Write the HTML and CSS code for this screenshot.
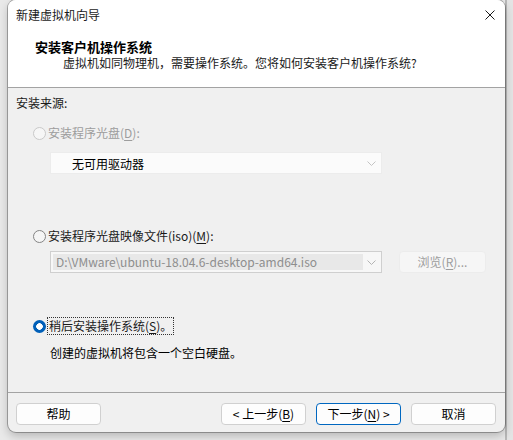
FILE: index.html
```html
<!DOCTYPE html>
<html lang="zh">
<head>
<meta charset="utf-8">
<title>新建虚拟机向导</title>
<link rel="stylesheet" href="styles.css">
</head>
<body>
<div class="window">
  <div class="top">
    <div class="titlebar">
      <span class="title">新建虚拟机向导</span>
      <svg class="close" width="10" height="10" viewBox="0 0 10 10"><path d="M0.5 0.5L9.5 9.5M9.5 0.5L0.5 9.5" stroke="#1a1a1a" stroke-width="1"/></svg>
    </div>
    <div class="header">
      <div class="h-title">安装客户机操作系统</div>
      <div class="h-sub">虚拟机如同物理机，需要操作系统。您将如何安装客户机操作系统?</div>
    </div>
  </div>
  <div class="content">
    <div class="label">安装来源:</div>

    <div class="radio-row disabled r1">
      <span class="radio"></span>
      <span class="rtext">安装程序光盘(<u>D</u>):</span>
    </div>
    <div class="combo combo-disabled c1">
      <span class="combo-text">无可用驱动器</span>
      <svg class="chev" width="9" height="5" viewBox="0 0 9 5"><path d="M0.5 0.5L4.5 4.5L8.5 0.5" fill="none" stroke="#c4c4c4" stroke-width="1"/></svg>
    </div>

    <div class="radio-row r2">
      <span class="radio"></span>
      <span class="rtext">安装程序光盘映像文件(iso)(<u>M</u>):</span>
    </div>
    <div class="combo-line">
      <div class="combo c2">
        <span class="combo-sel">D:\VMware\ubuntu-18.04.6-desktop-amd64.iso</span>
        <svg class="chev" width="9" height="5" viewBox="0 0 9 5"><path d="M0.5 0.5L4.5 4.5L8.5 0.5" fill="none" stroke="#b4b4b4" stroke-width="1"/></svg>
      </div>
      <div class="btn btn-disabled browse">浏览(<u>R</u>)...</div>
    </div>

    <div class="radio-row r3">
      <span class="radio checked"></span>
      <span class="rtext focus">稍后安装操作系统(<u>S</u>)。</span>
    </div>
    <div class="desc">创建的虚拟机将包含一个空白硬盘。</div>
  </div>
  <div class="footer">
    <div class="btn">帮助</div>
    <div class="spacer"></div>
    <div class="btn">&lt; 上一步(<u>B</u>)</div>
    <div class="btn btn-default">下一步(<u>N</u>) &gt;</div>
    <div class="btn">取消</div>
  </div>
</div>
</body>
</html>
```

FILE: styles.css
```css
html, body {
  margin: 0;
  padding: 0;
}
body {
  width: 513px;
  height: 440px;
  overflow: hidden;
  background: linear-gradient(to right, #e9e9e9 0, #e9e9e9 505px, #b9b9b9 505px, #b9b9b9 507px, #e4e4e4 507px);
  font-family: "Noto Sans CJK SC", "Noto Sans", sans-serif;
  font-size: 12px;
  color: #1a1a1a;
}
u {
  text-decoration: underline;
  text-underline-offset: 2px;
}
.window {
  margin-left: 8px;
  width: 497px;
  height: 432px;
  background: #f0f0f0;
  border-radius: 8px;
  box-shadow: 0 0 0 1px rgba(0,0,0,0.28), 0 4px 10px rgba(0,0,0,0.22);
  overflow: hidden;
  display: flex;
  flex-direction: column;
}
.top {
  background: #ffffff;
  border-bottom: 1px solid #a3a3a3;
  height: 88px;
  box-sizing: border-box;
}
.titlebar {
  height: 30px;
  display: flex;
  align-items: center;
  padding-left: 8px;
  padding-right: 10px;
}
.title {
  flex: 1;
  line-height: 16px;
}
.close {
  display: block;
}
.header {
  padding-top: 9px;
}
.h-title {
  font-weight: bold;
  font-size: 13px;
  line-height: 16px;
  padding-left: 27px;
  color: #000;
}
.h-sub {
  line-height: 16px;
  padding-left: 55px;
}
.content {
  flex: 1;
  padding-left: 8px;
  padding-top: 7px;
  border-bottom: 1px solid #a3a3a3;
}
.label {
  line-height: 16px;
}
.radio-row {
  display: flex;
  align-items: center;
  padding-left: 17px;
  height: 16px;
}
.r1 { margin-top: 14px; }
.r2 { margin-top: 54px; }
.r3 { margin-top: 45px; }
.radio {
  width: 11px;
  height: 11px;
  border-radius: 50%;
  border: 1px solid #848484;
  background: #f5f5f5;
  margin-right: 2px;
  box-sizing: content-box;
  flex: none;
}
.disabled .radio {
  border-color: #c9c9c9;
  background: #f6f6f6;
}
.disabled .rtext {
  color: #9d9d9d;
}
.radio.checked {
  width: 13px;
  height: 13px;
  border: none;
  background: radial-gradient(circle, #ffffff 0, #ffffff 3px, #005fb8 3.6px);
}
.rtext {
  line-height: 16px;
}
.focus {
  outline: 1px dotted #333;
  outline-offset: 0px;
  padding: 0 1px;
}
.combo {
  position: relative;
  height: 22px;
  box-sizing: border-box;
  width: 332px;
  margin-left: 34px;
  display: flex;
  align-items: center;
}
.c1 {
  margin-top: 11px;
  background: #fbfbfb;
  border: 1px solid #ececec;
}
.combo-text {
  padding-left: 21px;
  color: #000;
}
.chev {
  position: absolute;
  right: 5px;
  top: 8px;
}
.combo-line {
  display: flex;
  align-items: center;
  margin-top: 7px;
}
.c2 {
  background: #f7f7f7;
  border: 1px solid #cfcfcf;
  padding: 2px;
}
.combo-sel {
  background: #e8e8e8;
  color: #8e8e8e;
  height: 16px;
  line-height: 16px;
  width: 310px;
  padding-left: 3px;
  box-sizing: border-box;
  white-space: nowrap;
  overflow: hidden;
}
.btn {
  width: 85px;
  height: 22px;
  box-sizing: border-box;
  border: 1px solid #d0d0d0;
  border-radius: 4px;
  background: #fdfdfd;
  display: flex;
  align-items: center;
  justify-content: center;
  line-height: 16px;
  color: #000;
}
.btn-disabled {
  background: #f6f6f6;
  border-color: #ececec;
  color: #9d9d9d;
}
.browse {
  width: 87px;
  margin-left: 17px;
}
.btn-default {
  border-color: #0067c0;
}
.desc {
  margin-top: 11px;
  padding-left: 34px;
  line-height: 16px;
  color: #000;
}
.footer {
  height: 39px;
  display: flex;
  align-items: flex-start;
  padding: 10px 9px 0 8px;
  box-sizing: border-box;
  gap: 10px;
}
.spacer {
  flex: 1;
}
```
